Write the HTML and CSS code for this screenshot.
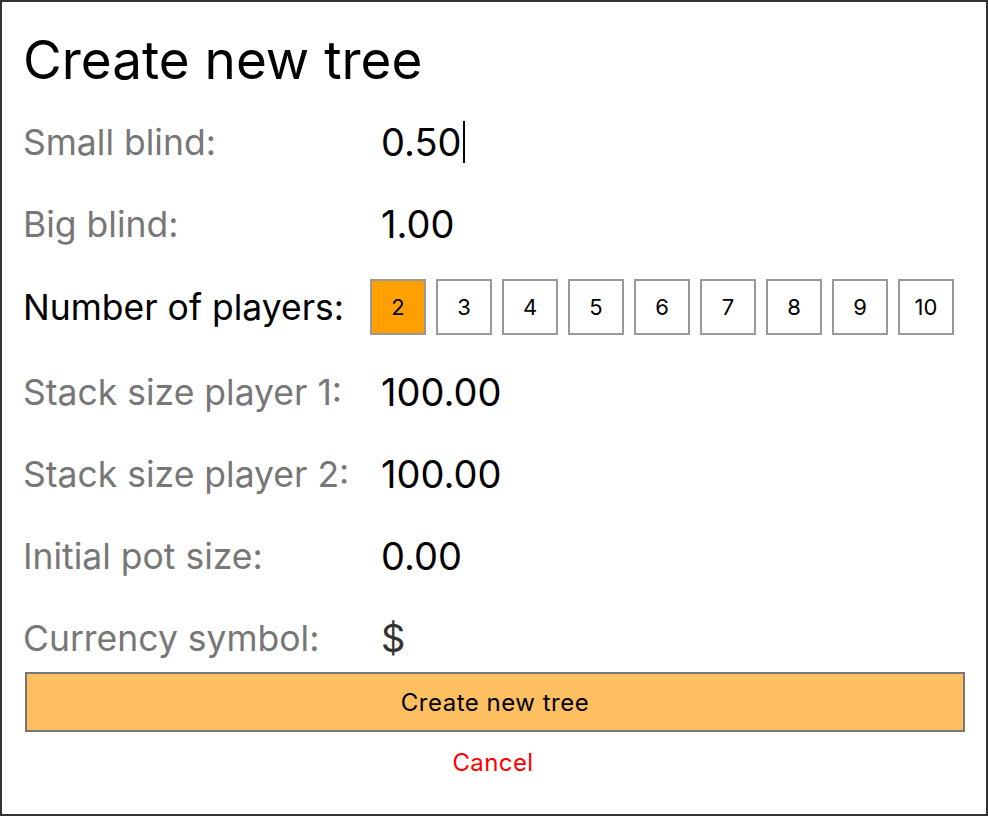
FILE: index.html
```html
<!DOCTYPE html>
<html>
<head>
<meta charset="utf-8">
<link rel="stylesheet" href="styles.css">
</head>
<body>
<div class="dialog">
  <h1 class="title">Create new tree</h1>
  <div class="form">
    <div class="row">
      <label class="label">Small blind:</label>
      <div class="value"><span>0.50</span><span class="caret"></span></div>
    </div>
    <div class="row">
      <label class="label">Big blind:</label>
      <div class="value">1.00</div>
    </div>
    <div class="row row-players">
      <label class="label active">Number of players:</label>
      <div class="players">
        <button class="pbtn selected">2</button>
        <button class="pbtn">3</button>
        <button class="pbtn">4</button>
        <button class="pbtn">5</button>
        <button class="pbtn">6</button>
        <button class="pbtn">7</button>
        <button class="pbtn">8</button>
        <button class="pbtn">9</button>
        <button class="pbtn">10</button>
      </div>
    </div>
    <div class="row">
      <label class="label">Stack size player 1:</label>
      <div class="value">100.00</div>
    </div>
    <div class="row">
      <label class="label">Stack size player 2:</label>
      <div class="value">100.00</div>
    </div>
    <div class="row">
      <label class="label">Initial pot size:</label>
      <div class="value">0.00</div>
    </div>
    <div class="row">
      <label class="label">Currency symbol:</label>
      <div class="value currency">$</div>
    </div>
  </div>
  <button class="create">Create new tree</button>
  <div class="cancel-wrap"><a class="cancel">Cancel</a></div>
</div>
</body>
</html>
```
FILE: styles.css
```css
* { box-sizing: border-box; }
html, body { margin: 0; padding: 0; background: #fff; }
body { font-family: Inter, "Noto Sans", sans-serif; }
.dialog {
  width: 988px;
  height: 816px;
  border: 2px solid #333;
  padding: 28px 23px 0 21px;
}
.title {
  margin: 0 0 11px 0;
  font-weight: 400;
  font-size: 53px;
  line-height: 60px;
  color: #000;
}
.form { display: flex; flex-direction: column; }
.row {
  display: grid;
  grid-template-columns: 347px 1fr;
  align-items: center;
  height: 82px;
}
.row-players { margin: 1px 0 3px 0; }
.label { font-size: 35.5px; color: #777; }
.label.active { color: #000; }
.value { font-size: 38px; color: #000; padding-left: 11px; display: flex; align-items: center; }
.value.currency { color: #333; }
.caret { display: inline-block; width: 2px; height: 42px; background: #000; margin-left: 1px; }
.players { display: flex; gap: 10px; }
.pbtn {
  width: 56px; height: 56px;
  border: 2px solid #999;
  background: #fff;
  font-family: Inter, sans-serif;
  font-size: 22px;
  color: #000;
  padding: 0;
}
.pbtn.selected { background: #ff9f00; }
.create {
  display: block;
  width: 940px;
  height: 60px;
  margin-top: -7px;
  margin-left: 2px;
  background: #fdbf60;
  border: 2px solid #777;
  font-family: Inter, sans-serif;
  font-size: 24px;
  color: #000;
  letter-spacing: 0.5px;
}
.cancel-wrap { text-align: center; margin-top: 16px; }
.cancel { color: #f00; font-size: 24px; letter-spacing: 0.4px; }
```
